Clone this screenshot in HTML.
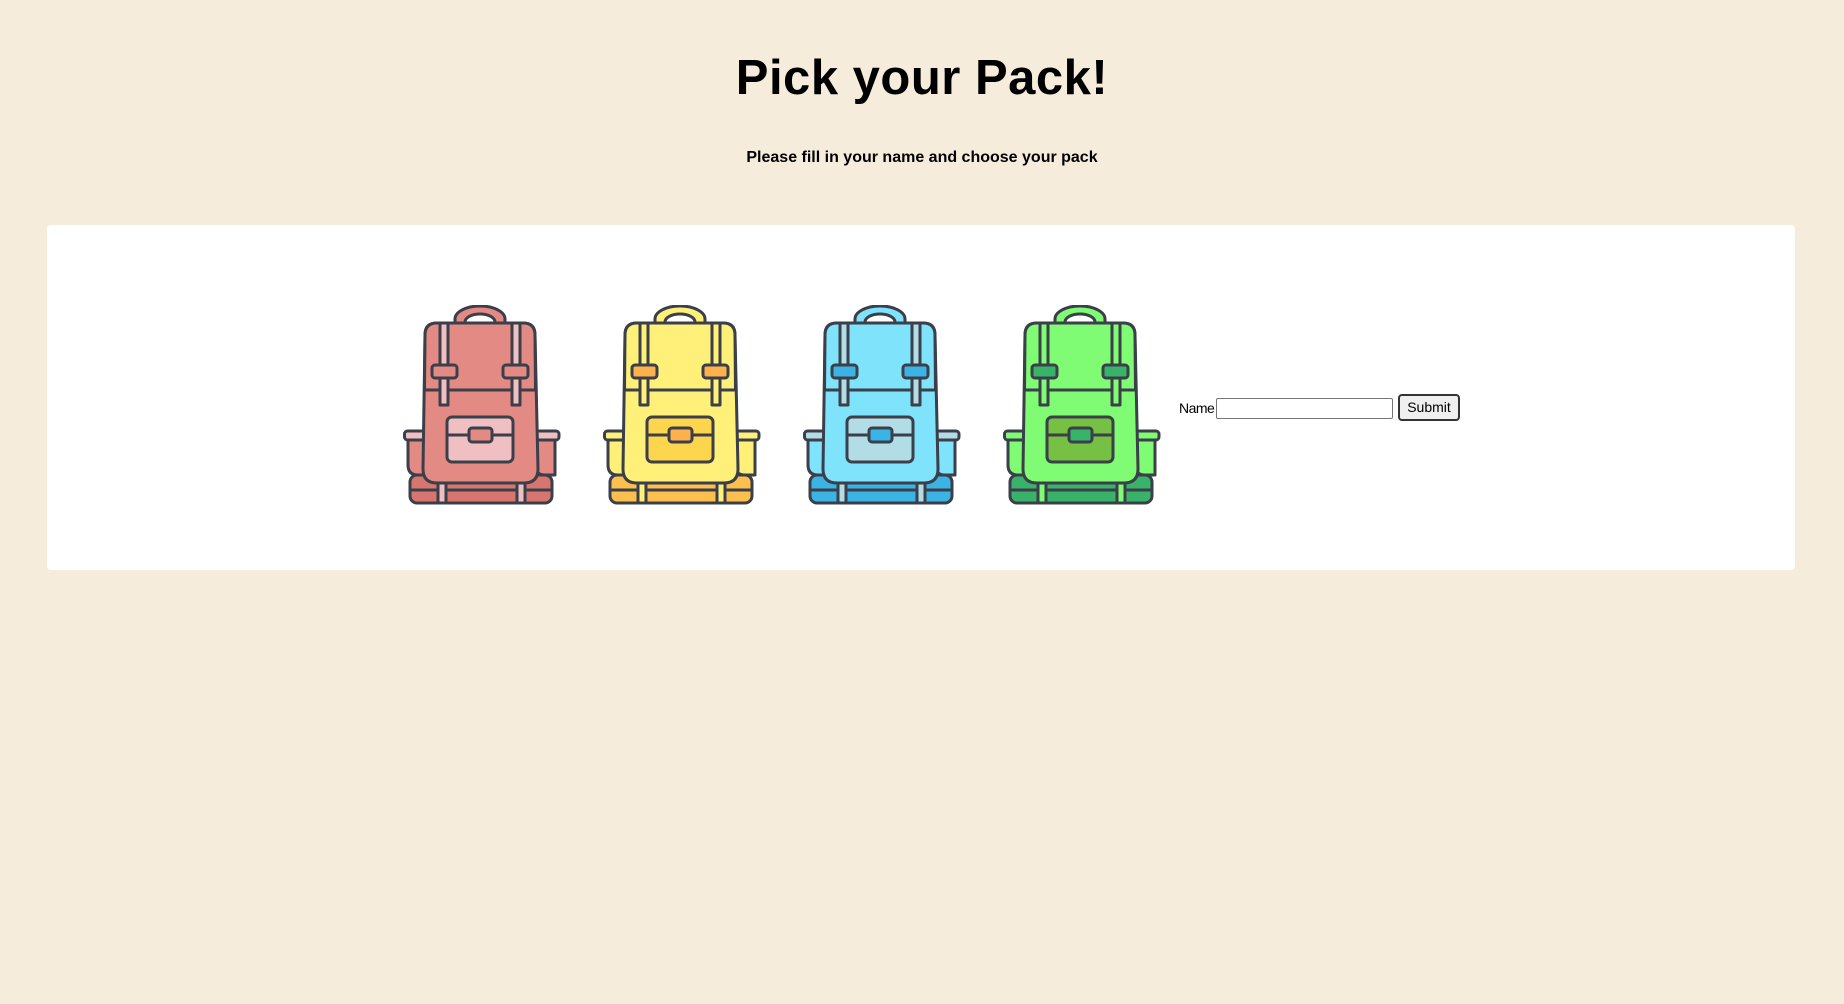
<!DOCTYPE html>
<html><head><meta charset="utf-8"><style>
html,body{margin:0;padding:0;width:1844px;height:1004px;background:#f5ecdb;overflow:hidden;font-family:"Liberation Sans",sans-serif;}
h1{position:absolute;left:0;right:0;top:49px;margin:0;text-align:center;font-size:49px;font-weight:900;line-height:58px;color:#000;letter-spacing:0.5px;}
.sub{position:absolute;left:0;right:0;top:149px;text-align:center;font-size:16px;font-weight:bold;color:#000;}
.card{position:absolute;left:47px;top:225px;width:1748px;height:345px;background:#fff;border-radius:4px;}
svg.pack{position:absolute;top:305px;width:160px;height:200px;}
.lbl{position:absolute;left:1179px;top:400px;font-size:14px;color:#000;letter-spacing:-0.5px;}
.inp{position:absolute;left:1216px;top:398px;width:175px;height:19px;border:1px solid #767676;border-radius:2px;background:#fff;}
.btn{position:absolute;left:1398px;top:394px;width:62px;height:27px;border:2px solid #333;border-radius:4px;background:#efefef;font-size:14px;text-align:center;box-sizing:border-box;line-height:22px;}
</style></head><body>
<h1>Pick your Pack!</h1>
<div class="sub">Please fill in your name and choose your pack</div>
<div class="card"></div>

<svg width="0" height="0" style="position:absolute">
<defs>
<g id="bp" stroke="#3a3f4a" stroke-width="3" stroke-linejoin="round">
  <path d="M52 20 V14 A25 13 0 0 1 102 14 V20 H92 V17 A15 8 0 0 0 62 17 V20 Z" fill="var(--m)"/>
  <rect x="1.5" y="126" width="27" height="9" rx="3" fill="var(--l)"/>
  <path d="M5 135 V160 Q5 170 15 170 H25 V135 Z" fill="var(--m)"/>
  <rect x="128" y="126" width="28" height="9" rx="3" fill="var(--l)"/>
  <path d="M132 135 V160 Q132 170 142 170 H152 V135 Z" fill="var(--m)"/>
  <rect x="7" y="170" width="142" height="28" rx="7" fill="var(--d)"/>
  <line x1="7" y1="185" x2="149" y2="185"/>
  <rect x="35" y="170" width="8" height="28" fill="var(--l)"/>
  <rect x="114" y="170" width="8" height="28" fill="var(--l)"/>
  <path d="M22 30 Q22 18 34 18 H120 Q132 18 132 30 L135 164 Q135 178 121 178 H34 Q20 178 20 164 Z" fill="var(--m)"/>
  <path d="M22 30 Q22 18 34 18 H120 Q132 18 132 30 L132.5 85 H21.5 Z" fill="var(--m)"/>
  <rect x="37" y="18" width="8" height="82" fill="var(--l)"/>
  <rect x="109" y="18" width="8" height="82" fill="var(--l)"/>
  <rect x="29" y="60" width="25" height="13" rx="3" fill="var(--a)"/>
  <rect x="100" y="60" width="25" height="13" rx="3" fill="var(--a)"/>
  <rect x="44" y="112" width="66" height="45" rx="5" fill="var(--p)"/>
  <line x1="44" y1="130" x2="110" y2="130"/>
  <rect x="66" y="123" width="23" height="14" rx="3" fill="var(--a)"/>
</g>
</defs></svg>

<svg class="pack" style="left:403px;--m:#e38a84;--l:#f0bfc2;--d:#d9756f;--a:#e38a84;--p:#f0bfc2" viewBox="0 0 160 200"><use href="#bp"/></svg>
<svg class="pack" style="left:603px;--m:#fff07a;--l:#fff07a;--d:#fdbf4d;--a:#fdb24d;--p:#fdd64d" viewBox="0 0 160 200"><use href="#bp"/></svg>
<svg class="pack" style="left:803px;--m:#7fe3fb;--l:#b2dde6;--d:#3bb4e5;--a:#3bb4e5;--p:#b2dde6" viewBox="0 0 160 200"><use href="#bp"/></svg>
<svg class="pack" style="left:1003px;--m:#80fc74;--l:#80fc74;--d:#3ab36a;--a:#3ab36a;--p:#76c043" viewBox="0 0 160 200"><use href="#bp"/></svg>

<div class="lbl">Name</div>
<div class="inp"></div>
<div class="btn">Submit</div>
</body></html>
